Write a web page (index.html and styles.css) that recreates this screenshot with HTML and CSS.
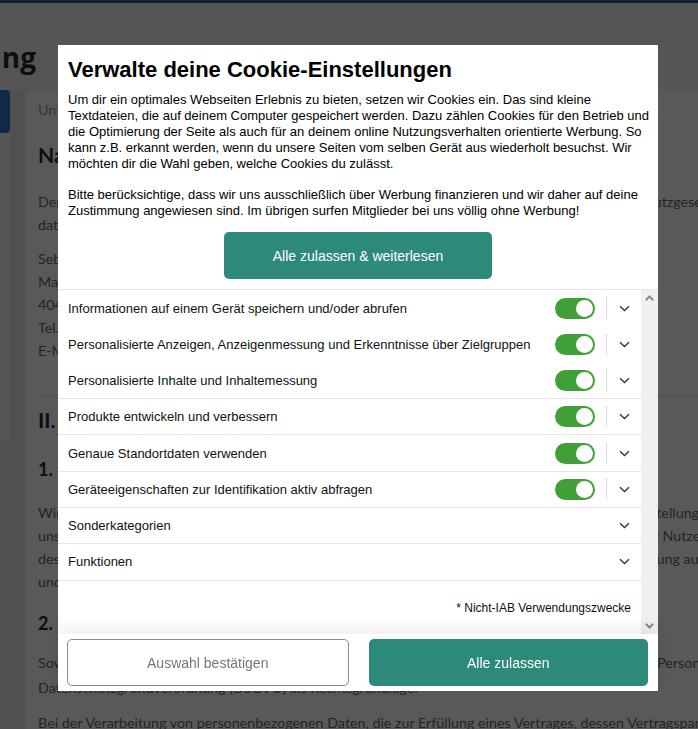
FILE: index.html
```html
<!DOCTYPE html>
<html lang="de">
<head>
    <meta charset="UTF-8">
    <meta name="viewport" content="width=device-width, initial-scale=1.0">
    <title>Datenschutzerklärung</title>
    <link rel="stylesheet" href="styles.css">
</head>
<body>
    <div class="page">
        <div class="topbar"></div>
        <header class="page-head">
            <div class="title-box"><h1>Datenschutzerklärung</h1></div>
        </header>
        <div class="page-body">
            <aside class="sidebar">
                <div class="nav-active"></div>
                <div class="nav-box"></div>
            </aside>
            <main class="content">
                <p class="intro">Unten finden Sie unsere Datenschutzerklärung</p>
                <h2>Name und Anschrift des Verantwortlichen</h2>
                <p class="text">
                    <span class="line">Der Verantwortliche im Sinne der Datenschutz-Grundverordnung und anderer nationaler Datenschutzgesetze der Mitgliedsstaaten sowie sonstiger</span>
                    <span class="line">datenschutzrechtlicher Bestimmungen ist:</span>
                </p>
                <p class="text address">
                    <span class="line">Sebastian Mustermann</span>
                    <span class="line">Marienstraße 12</span>
                    <span class="line">40477 Düsseldorf</span>
                    <span class="line">Tel.: 0211 1234567</span>
                    <span class="line">E-Mail: info@example.de</span>
                </p>
                <hr>
                <h2>II. Allgemeines zur Datenverarbeitung</h2>
                <h3>1. Umfang der Verarbeitung personenbezogener Daten</h3>
                <p class="text">
                    <span class="line">Wir verarbeiten personenbezogene Daten unserer Nutzer grundsätzlich nur, soweit dies zur Bereitstellung einer funktionsfähigen Website sowie</span>
                    <span class="line">unserer Inhalte und Leistungen erforderlich ist. Die Verarbeitung personenbezogener Daten unserer Nutzer erfolgt regelmäßig nur nach Einwilligung</span>
                    <span class="line">des Nutzers. Eine Ausnahme gilt in solchen Fällen, in denen eine vorherige Einholung einer Einwilligung aus tatsächlichen Gründen nicht möglich ist</span>
                    <span class="line">und die Verarbeitung der Daten durch gesetzliche Vorschriften gestattet ist.</span>
                </p>
                <h3>2. Rechtsgrundlage für die Verarbeitung personenbezogener Daten</h3>
                <p class="text legal">
                    <span class="line">Soweit wir für Verarbeitungsvorgänge personenbezogener Daten eine Einwilligung der betroffenen Person einholen, dient Art. 6 Abs. 1 lit. a EU-</span>
                    <span class="line">Datenschutzgrundverordnung (DSGVO) als Rechtsgrundlage.</span>
                </p>
                <p class="text">
                    <span class="line">Bei der Verarbeitung von personenbezogenen Daten, die zur Erfüllung eines Vertrages, dessen Vertragspartei die betroffene Person ist, erforderlich ist,</span>
                </p>
            </main>
        </div>
    </div>

    <div class="overlay">
        <div class="cookie-dialog">
            <h2 class="cd-title">Verwalte deine Cookie-Einstellungen</h2>
            <div class="cd-text">
                <p>Um dir ein optimales Webseiten Erlebnis zu bieten, setzen wir Cookies ein. Das sind kleine Textdateien, die auf deinem Computer gespeichert werden. Dazu zählen Cookies für den Betrieb und die Optimierung der Seite als auch für an deinem online Nutzungsverhalten orientierte Werbung. So kann z.B. erkannt werden, wenn du unsere Seiten vom selben Gerät aus wiederholt besuchst. Wir möchten dir die Wahl geben, welche Cookies du zulässt.</p>
                <p>Bitte berücksichtige, dass wir uns ausschließlich über Werbung finanzieren und wir daher auf deine Zustimmung angewiesen sind. Im übrigen surfen Mitglieder bei uns völlig ohne Werbung!</p>
            </div>
            <div class="cd-center">
                <button class="btn btn-primary btn-wide">Alle zulassen &amp; weiterlesen</button>
            </div>

            <div class="cd-scroll">
                <div class="cd-list">
                    <div class="purpose">
                        <span class="purpose-name">Informationen auf einem Gerät speichern und/oder abrufen</span>
                        <span class="switch"><span class="switch-knob"></span></span>
                        <span class="divider"></span>
                        <span class="chevron"><svg width="11" height="7" viewBox="0 0 11 7"><path d="M1 1.2 L5.5 5.5 L10 1.2" fill="none" stroke="#333" stroke-width="1.3"/></svg></span>
                    </div>
                    <div class="purpose">
                        <span class="purpose-name">Personalisierte Anzeigen, Anzeigenmessung und Erkenntnisse über Zielgruppen</span>
                        <span class="switch"><span class="switch-knob"></span></span>
                        <span class="divider"></span>
                        <span class="chevron"><svg width="11" height="7" viewBox="0 0 11 7"><path d="M1 1.2 L5.5 5.5 L10 1.2" fill="none" stroke="#333" stroke-width="1.3"/></svg></span>
                    </div>
                    <div class="purpose ruled">
                        <span class="purpose-name">Personalisierte Inhalte und Inhaltemessung</span>
                        <span class="switch"><span class="switch-knob"></span></span>
                        <span class="divider"></span>
                        <span class="chevron"><svg width="11" height="7" viewBox="0 0 11 7"><path d="M1 1.2 L5.5 5.5 L10 1.2" fill="none" stroke="#333" stroke-width="1.3"/></svg></span>
                    </div>
                    <div class="purpose ruled">
                        <span class="purpose-name">Produkte entwickeln und verbessern</span>
                        <span class="switch"><span class="switch-knob"></span></span>
                        <span class="divider"></span>
                        <span class="chevron"><svg width="11" height="7" viewBox="0 0 11 7"><path d="M1 1.2 L5.5 5.5 L10 1.2" fill="none" stroke="#333" stroke-width="1.3"/></svg></span>
                    </div>
                    <div class="purpose ruled">
                        <span class="purpose-name">Genaue Standortdaten verwenden</span>
                        <span class="switch"><span class="switch-knob"></span></span>
                        <span class="divider"></span>
                        <span class="chevron"><svg width="11" height="7" viewBox="0 0 11 7"><path d="M1 1.2 L5.5 5.5 L10 1.2" fill="none" stroke="#333" stroke-width="1.3"/></svg></span>
                    </div>
                    <div class="purpose ruled">
                        <span class="purpose-name">Geräteeigenschaften zur Identifikation aktiv abfragen</span>
                        <span class="switch"><span class="switch-knob"></span></span>
                        <span class="divider"></span>
                        <span class="chevron"><svg width="11" height="7" viewBox="0 0 11 7"><path d="M1 1.2 L5.5 5.5 L10 1.2" fill="none" stroke="#333" stroke-width="1.3"/></svg></span>
                    </div>
                    <div class="purpose ruled">
                        <span class="purpose-name">Sonderkategorien</span>
                        <span class="chevron"><svg width="11" height="7" viewBox="0 0 11 7"><path d="M1 1.2 L5.5 5.5 L10 1.2" fill="none" stroke="#333" stroke-width="1.3"/></svg></span>
                    </div>
                    <div class="purpose ruled">
                        <span class="purpose-name">Funktionen</span>
                        <span class="chevron"><svg width="11" height="7" viewBox="0 0 11 7"><path d="M1 1.2 L5.5 5.5 L10 1.2" fill="none" stroke="#333" stroke-width="1.3"/></svg></span>
                    </div>
                    <p class="cd-note">* Nicht-IAB Verwendungszwecke</p>
                </div>
                <div class="scrollbar">
                    <svg width="9" height="6" viewBox="0 0 9 6"><path d="M0.8 5.2 L4.5 1.5 L8.2 5.2" fill="none" stroke="#8a8a8a" stroke-width="2"/></svg>
                    <svg width="9" height="6" viewBox="0 0 9 6"><path d="M0.8 0.8 L4.5 4.5 L8.2 0.8" fill="none" stroke="#8a8a8a" stroke-width="2"/></svg>
                </div>
            </div>

            <div class="cd-footer">
                <button class="btn btn-outline">Auswahl bestätigen</button>
                <button class="btn btn-primary">Alle zulassen</button>
            </div>
        </div>
    </div>
</body>
</html>
```

FILE: styles.css
```css
body {
    margin: 0;
    font-family: Lato, "Open Sans", sans-serif;
    background: #e6e6e6;
    overflow: hidden;
}

.page {
    width: 100%;
    height: 100vh;
    overflow: hidden;
}

.topbar {
    height: 3px;
    background: #2b5c98;
}

.page-head {
    height: 87px;
    background: #f3f3f3;
}

.title-box {
    width: 36px;
    display: flex;
    justify-content: flex-end;
}

h1 {
    margin: 40px 0 0;
    font-family: "Open Sans", Lato, sans-serif;
    font-size: 28px;
    line-height: 1;
    font-weight: 700;
    color: #2a2a2a;
    white-space: nowrap;
}

.page-body {
    display: flex;
    gap: 15px;
}

.sidebar {
    width: 10px;
    flex: none;
    display: flex;
    flex-direction: column;
}

.nav-active {
    height: 43px;
    background: #2878cb;
    border-radius: 0 4px 4px 0;
}

.nav-box {
    height: 307px;
    background: #f3f3f3;
}

.content {
    flex: none;
    width: 1000px;
    min-height: 700px;
    background: #fff;
    border-radius: 6px 0 0 0;
    padding: 8px 13px 0;
    color: #6a6a6a;
    font-size: 14.3px;
}

.intro {
    margin: 0;
    line-height: 23px;
    color: #9a9a9a;
}

.content h2 {
    margin: 20px 0 0;
    font-size: 21px;
    line-height: 28px;
    color: #2a2a2a;
}

.content h3 {
    margin: 23px 0 0;
    font-size: 18px;
    line-height: 24px;
    color: #2a2a2a;
}

.text {
    margin: 21px 0 0;
    line-height: 23px;
}

.line {
    display: block;
    white-space: nowrap;
}

.address {
    margin-top: 14px;
}

.content hr {
    margin: 33px 0 0;
    border: 0;
    border-top: 1px solid #e0e0e0;
}

.content hr + h2 {
    margin-top: 10px;
}

.content h3 + .text {
    margin-top: 20px;
}

.content .text + h3 {
    margin-top: 18px;
}

.content h3 + .legal {
    margin-top: 15px;
    line-height: 25px;
}

.content .text + .text {
    margin-top: 11px;
}

/* cookie dialog */
.overlay {
    position: fixed;
    inset: 0;
    background: rgba(0, 0, 0, 0.65);
    display: flex;
    align-items: flex-start;
    padding: 45px 0 0 58px;
}

.cookie-dialog {
    width: 600px;
    background: #fff;
    display: flex;
    flex-direction: column;
    font-family: "Liberation Sans", Arial, sans-serif;
    color: #000;
}

.cd-title {
    margin: 12px 10px 0;
    font-size: 22px;
    line-height: 26px;
    font-weight: bold;
}

.cd-text {
    margin: 9px 4px 0 10px;
    font-size: 13px;
    line-height: 15.9px;
}

.cd-text p {
    margin: 0;
}

.cd-text p + p {
    margin-top: 15.9px;
}

.cd-center {
    display: flex;
    justify-content: center;
    margin-top: 13px;
}

.btn {
    height: 47px;
    border-radius: 5px;
    font-family: "Liberation Sans", Arial, sans-serif;
    font-size: 14px;
    cursor: pointer;
}

.btn-primary {
    background: #2d8a7b;
    color: #fff;
    border: 0;
}

.btn-outline {
    background: #fff;
    color: #777;
    border: 1px solid #8c8c8c;
}

.btn-wide {
    width: 268px;
}

.cd-scroll {
    display: flex;
    height: 345px;
    margin-top: 10px;
    border-top: 1px solid #e6e6e6;
    box-sizing: border-box;
}

.cd-list {
    flex: 1;
    overflow: hidden;
}

.purpose {
    display: flex;
    align-items: center;
    height: 36.3px;
    padding-left: 10px;
    box-sizing: border-box;
    font-size: 13px;
    color: #111;
}

.purpose.ruled {
    border-bottom: 1px solid #e6e6e6;
}

.purpose-name {
    flex: 1;
}

.switch {
    width: 40px;
    height: 21px;
    padding: 0 2px;
    box-sizing: border-box;
    border-radius: 11px;
    background: #40a037;
    display: flex;
    align-items: center;
    justify-content: flex-end;
}

.switch-knob {
    width: 17px;
    height: 17px;
    border-radius: 50%;
    background: #fff;
}

.divider {
    width: 1px;
    height: 22px;
    margin-left: 11px;
    background: #dcdcdc;
}

.chevron {
    width: 34px;
    display: flex;
    justify-content: center;
}

.cd-note {
    margin: 20px 10px 0;
    text-align: right;
    font-size: 12px;
    line-height: 14px;
    color: #111;
}

.scrollbar {
    width: 17px;
    flex: none;
    background: #f0f0f0;
    display: flex;
    flex-direction: column;
    justify-content: space-between;
    align-items: center;
    padding: 5px 0 5px;
    box-sizing: border-box;
}

.cd-footer {
    display: flex;
    gap: 20px;
    padding: 5px 10px 5px 9px;
    background: #fff;
    box-shadow: 0 -6px 14px rgba(0, 0, 0, 0.07);
}

.cd-footer .btn {
    flex: 1;
}
```
